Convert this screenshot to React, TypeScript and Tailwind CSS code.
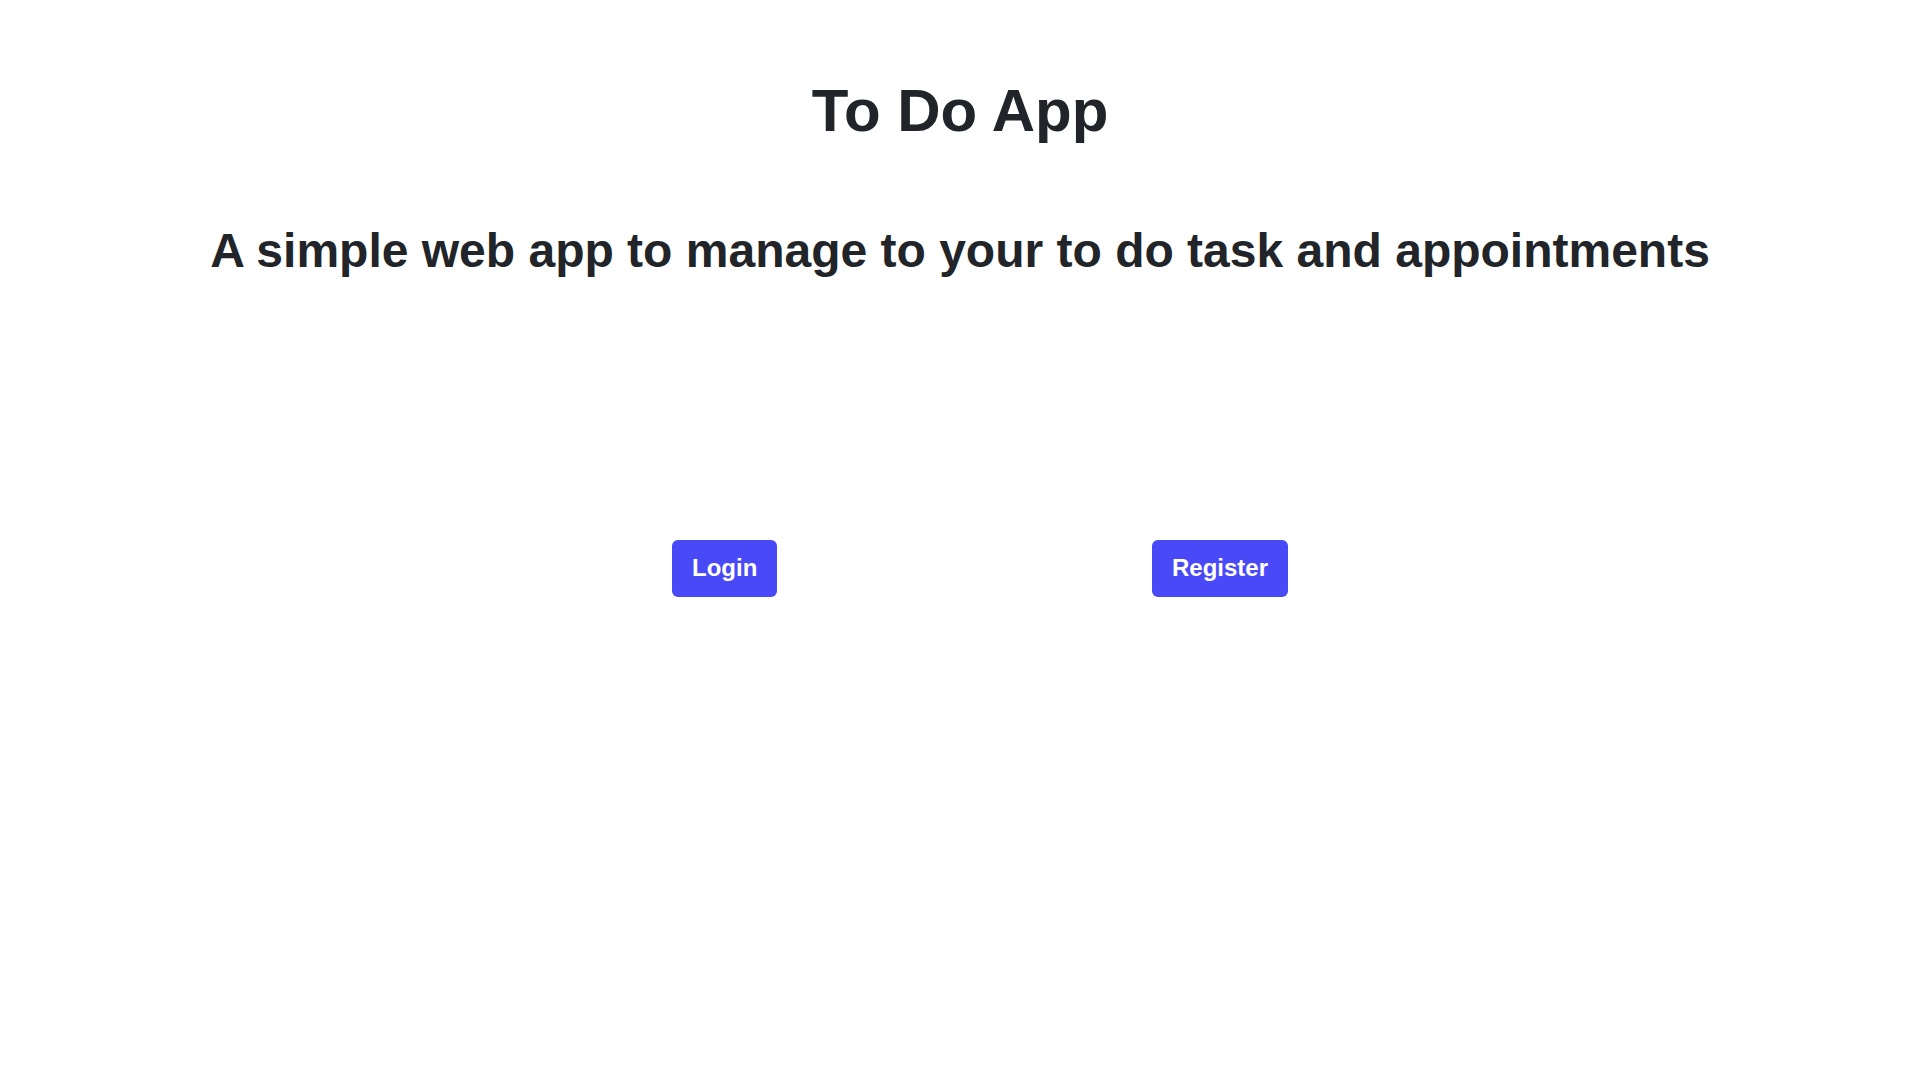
export default function App() {
  return (
    <div className="min-h-screen bg-white font-['Liberation_Sans',Arial,sans-serif] text-[#212529]">
      {/* Header */}
      <div className="flex flex-col items-center pt-[75px]">
        <h1 className="text-[60px] font-bold leading-[1.2]">To Do App</h1>
        <h2 className="mt-[75px] text-[48px] font-bold leading-[1.2]">
          A simple web app to manage to your to do task and appointments
        </h2>
      </div>

      {/* Actions */}
      <div className="mx-auto mt-[260px] grid w-[960px] grid-cols-2">
        <div className="pl-[192px]">
          <button className="rounded-[6px] bg-[#4949f8] px-[20px] py-[10.5px] text-[24px] font-bold leading-[36px] text-white">
            Login
          </button>
        </div>
        <div className="pl-[192px]">
          <button className="rounded-[6px] bg-[#4949f8] px-[20px] py-[10.5px] text-[24px] font-bold leading-[36px] text-white">
            Register
          </button>
        </div>
      </div>
    </div>
  )
}
